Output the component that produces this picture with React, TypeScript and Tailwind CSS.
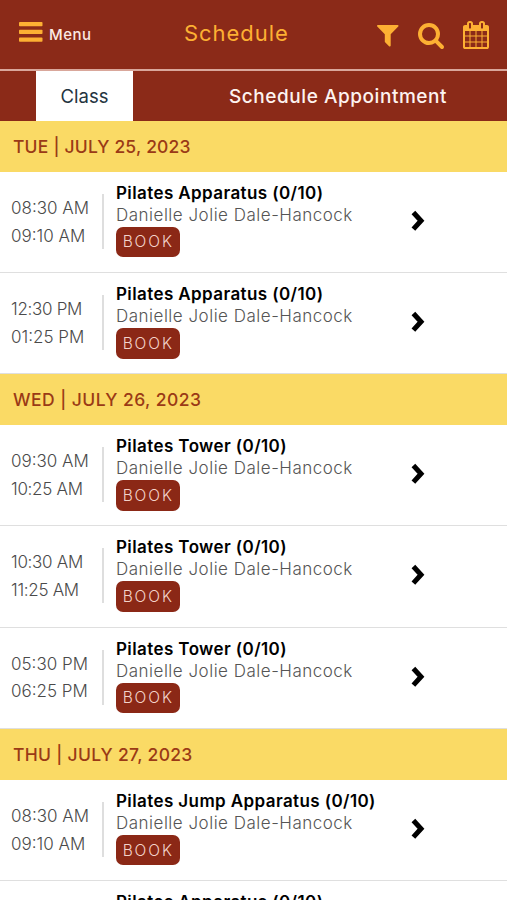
type ClassItem = {
  start: string;
  end: string;
  title: string;
  teacher: string;
};

type Day = {
  label: string;
  labelClass: string;
  classes: ClassItem[];
};

const teacher = "Danielle Jolie Dale-Hancock";

const days: Day[] = [
  {
    label: "TUE | JULY 25, 2023",
    labelClass: "tracking-[0.2px]",
    classes: [
      { start: "08:30 AM", end: "09:10 AM", title: "Pilates Apparatus (0/10)", teacher },
      { start: "12:30 PM", end: "01:25 PM", title: "Pilates Apparatus (0/10)", teacher },
    ],
  },
  {
    label: "WED | JULY 26, 2023",
    labelClass: "tracking-[0.45px]",
    classes: [
      { start: "09:30 AM", end: "10:25 AM", title: "Pilates Tower (0/10)", teacher },
      { start: "10:30 AM", end: "11:25 AM", title: "Pilates Tower (0/10)", teacher },
      { start: "05:30 PM", end: "06:25 PM", title: "Pilates Tower (0/10)", teacher },
    ],
  },
  {
    label: "THU | JULY 27, 2023",
    labelClass: "tracking-[0.3px]",
    classes: [
      { start: "08:30 AM", end: "09:10 AM", title: "Pilates Jump Apparatus (0/10)", teacher },
      { start: "09:30 AM", end: "10:10 AM", title: "Pilates Apparatus (0/10)", teacher },
    ],
  },
];

const icons = {
  filter:
    "M1595 295q17 41-14 70l-493 493v742q0 42-39 59-13 5-25 5-27 0-45-19l-256-256q-19-19-19-45v-486l-493-493q-31-29-14-70 17-39 59-39h1280q42 0 59 39z",
  search:
    "M1216 832q0-185-131.5-316.5t-316.5-131.5-316.5 131.5-131.5 316.5 131.5 316.5 316.5 131.5 316.5-131.5 131.5-316.5zm512 832q0 52-38 90t-90 38q-54 0-90-38l-343-342q-179 124-399 124-143 0-273.5-55.5t-225-150-150-225-55.5-273.5 55.5-273.5 150-225 225-150 273.5-55.5 273.5 55.5 225 150 150 225 55.5 273.5q0 220-124 399l343 343q37 37 37 90z",
  calendar:
    "M192 1664h288v-288h-288v288zm352 0h320v-288h-320v288zm-352-352h288v-320h-288v320zm352 0h320v-320h-320v320zm-352-384h288v-288h-288v288zm736 736h320v-288h-320v288zm-384-736h320v-288h-320v288zm768 736h288v-288h-288v288zm-384-352h320v-320h-320v320zm-352-864v-288q0-13-9.500-22.500t-22.500-9.500h-64q-13 0-22.500 9.500t-9.500 22.500v288q0 13 9.500 22.500t22.500 9.500h64q13 0 22.500-9.500t9.500-22.500zm736 864h288v-320h-288v320zm-384-384h320v-288h-320v288zm384 0h288v-288h-288v288zm32-480v-288q0-13-9.500-22.500t-22.500-9.500h-64q-13 0-22.500 9.500t-9.500 22.500v288q0 13 9.500 22.500t22.500 9.500h64q13 0 22.500-9.500t9.500-22.500zm384-64v1280q0 52-38 90t-90 38h-1408q-52 0-90-38t-38-90v-1280q0-52 38-90t90-38h128v-96q0-66 47-113t113-47h64q66 0 113 47t47 113v96h384v-96q0-66 47-113t113-47h64q66 0 113 47t47 113v96h128q52 0 90 38t38 90z",
};

function Icon({ path, className }: { path: string; className?: string }) {
  return (
    <svg viewBox="0 0 1792 1792" fill="currentColor" className={className}>
      <path d={path} />
    </svg>
  );
}

function Header() {
  return (
    <header className="flex h-[69px] items-start text-[#fdb033]">
      <button className="flex w-[184px] pt-[22px] pl-[19px]">
        <svg viewBox="0 0 24 20" fill="currentColor" className="h-5 w-6">
          <rect x="0" y="0" width="23.5" height="4.2" rx="0.8" />
          <rect x="0" y="7.8" width="23.5" height="4.2" rx="0.8" />
          <rect x="0" y="15.6" width="23.5" height="4.2" rx="0.8" />
        </svg>
        <span className="mt-[3px] ml-[6px] text-[15px] leading-5 font-medium tracking-[0.5px] text-[#fbe9e4]">Menu</span>
      </button>
      <h1 className="w-[190px] pt-[19px] text-[22px] leading-7 font-normal tracking-[0.95px] whitespace-nowrap">
        Schedule
      </h1>
      <div className="flex pt-[20.5px]">
        <Icon path={icons.filter} className="size-[27.5px]" />
        <Icon path={icons.search} className="ml-[15px] size-[28px]" />
        <Icon path={icons.calendar} className="ml-[17.5px] size-[28px]" />
      </div>
    </header>
  );
}

function Tabs() {
  return (
    <nav className="flex h-[52px] border-t-2 border-[#d9a79b] pl-9 leading-[51px] font-medium">
      <button className="w-[97px] bg-white text-center text-[18.5px] font-normal text-[#24343f]">Class</button>
      <button className="pl-24 text-left text-[19px] tracking-[0.55px] whitespace-nowrap text-[#fdf3f0]">
        Schedule Appointment
      </button>
    </nav>
  );
}

function Time({ value }: { value: string }) {
  return <p className={value.startsWith("1") ? "tracking-[-0.3px]" : "tracking-normal"}>{value}</p>;
}

function ClassRow({ item }: { item: ClassItem }) {
  return (
    <li className="flex h-[101.3px] items-start border-b border-[#dfdfdf]">
      <div className="mt-[22px] h-[55px] w-[104px] border-r-2 border-[#dedede] pt-px pl-[11px] text-[17px] leading-[27.7px] font-light whitespace-nowrap text-[#4a4a4a]">
        <Time value={item.start} />
        <Time value={item.end} />
      </div>
      <div className="w-[295px] pt-[10px] pl-3 whitespace-nowrap">
        <h3 className="text-[17px] leading-[22px] font-semibold tracking-[0.4px] text-black">{item.title}</h3>
        <p className="text-[17px] leading-[22px] font-light tracking-[0.5px] text-[#555]">{item.teacher}</p>
        <button className="mt-px flex h-[30.5px] w-[63.5px] items-center justify-center rounded-[7px] bg-[#8b2816] pl-px text-[15.5px] font-light tracking-[1.9px] text-[#f3d3ca]">
          BOOK
        </button>
      </div>
      <svg viewBox="0 0 14 22" className="mt-[38px] ml-[12px] h-[22px] w-[14px]">
        <path d="M2.4 2.5 L10 10.8 L2.4 19.1" fill="none" stroke="#000" strokeWidth="5" />
      </svg>
    </li>
  );
}

export default function App() {
  return (
    <div className="h-[900px] w-[507px] overflow-hidden bg-white font-['Inter',sans-serif]">
      <div className="bg-[#8b2a18]">
        <Header />
        <Tabs />
      </div>
      {days.map((day) => (
        <section key={day.label}>
          <h2 className="h-[50.8px] bg-[#fada65] pl-[13px] text-[17.5px] leading-[51px] font-medium text-[#9a3a16]">
            <span className={day.labelClass}>{day.label}</span>
          </h2>
          <ul>
            {day.classes.map((item) => (
              <ClassRow key={item.start} item={item} />
            ))}
          </ul>
        </section>
      ))}
    </div>
  );
}
